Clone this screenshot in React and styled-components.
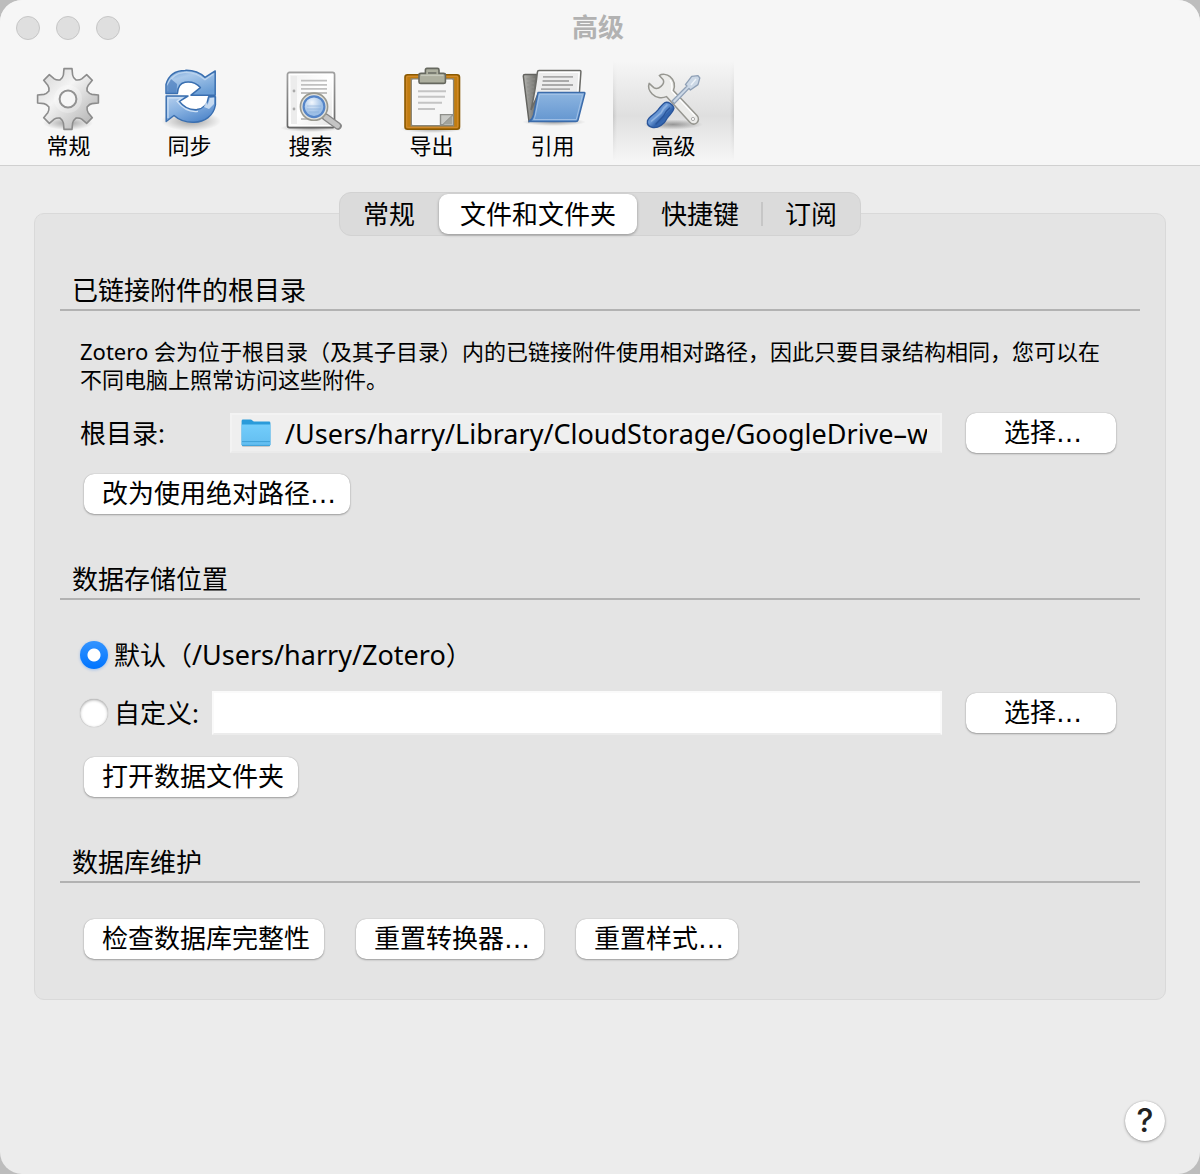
import React, { useState } from 'react';
import styled, { createGlobalStyle, css } from 'styled-components';

const GlobalStyle = createGlobalStyle`
  * {
    box-sizing: border-box;
  }
  body {
    margin: 0;
    background: #bdbdbd;
    color: #000;
    font-family: 'Noto Sans', 'Noto Sans CJK SC', sans-serif;
    font-size: 26px;
    line-height: 34px;
  }
  button, input {
    font: inherit;
    color: inherit;
  }
`;

const Window = styled.main`
  display: flex;
  flex-direction: column;
  min-height: 100vh;
  border-radius: 22px;
  background: #ececec;
  overflow: hidden;
`;

const Header = styled.header`
  background: #f6f6f6;
  border-bottom: 1px solid #d0d0d0;
`;

const TitleBar = styled.div`
  display: grid;
  grid-template-columns: 1fr auto 1fr;
  align-items: center;
  height: 56px;
  padding: 0 20px 0 16px;
`;

const Lights = styled.div`
  display: flex;
  gap: 16px;
`;

const Light = styled.button`
  width: 24px;
  height: 24px;
  padding: 0;
  border: 1px solid #c6c6c6;
  border-radius: 50%;
  background: #dfdfdf;
`;

const Title = styled.h1`
  margin: 0;
  padding-bottom: 2px;
  color: #b2b2b2;
  font-size: 26px;
  font-weight: 700;
`;

const Toolbar = styled.nav`
  display: flex;
  padding: 5px 8px 4px;
`;

const ToolbarButton = styled.button`
  display: flex;
  flex-direction: column;
  align-items: center;
  width: 121px;
  height: 100px;
  padding: 6px 0 0;
  border: 0;
  background: none;
  font-size: 22px;
  line-height: 28px;
  ${({ $active }) => $active && css`
    background:
      linear-gradient(#f6f6f6, transparent 55%, #f6f6f6),
      linear-gradient(90deg, #c8c8c8, #dfdfdf 4px, #dfdfdf calc(100% - 4px), #c8c8c8);
  `}
  svg {
    flex: none;
    margin-right: 2px;
    overflow: visible;
  }
`;

const Content = styled.div`
  display: flex;
  flex-direction: column;
  padding: 26px 34px 0;
`;

const Tabs = styled.div`
  display: flex;
  align-items: center;
  align-self: center;
  z-index: 1;
  height: 44px;
  padding: 0 1px;
  border: 1px solid #d2d2d2;
  border-radius: 12px;
  background: #dbdbdb;
`;

const Tab = styled.button`
  height: 40px;
  padding: 0 22px;
  border: 0;
  border-radius: 9px;
  background: none;
  ${({ $active }) => $active && css`
    margin: 0 2px;
    padding: 0 21px;
    background: #fff;
    box-shadow: 0 1px 3px rgba(0, 0, 0, 0.35);
  `}
`;

const TabDivider = styled.span`
  width: 2px;
  height: 24px;
  background: #c6c6c6;
`;

const Panel = styled.div`
  display: flex;
  flex-direction: column;
  gap: 48px;
  margin-top: -23px;
  padding: 59px 25px 40px;
  border: 1px solid #d9d9d9;
  border-radius: 10px;
  background: #e4e4e4;
`;

const SectionTitle = styled.h2`
  margin: 0;
  padding: 0 12px 2px;
  border-bottom: 2px solid #b2b2b2;
  font-size: 26px;
  font-weight: 400;
`;

const SectionBody = styled.div`
  padding: ${({ $top }) => $top || 36}px 24px 0 20px;
`;

const Note = styled.p`
  margin: 0 0 18px;
  font-size: 22px;
  line-height: 28px;
`;

const Row = styled.div`
  display: flex;
  align-items: center;
  min-height: 44px;
`;

const FieldLabel = styled.label`
  flex: none;
  width: ${({ $width }) => $width}px;
`;

const PathField = styled.div`
  display: flex;
  flex: 1;
  align-items: center;
  gap: 14px;
  min-width: 0;
  height: 40px;
  margin-right: 24px;
  padding: 0 13px 0 9px;
  border: 2px solid #f3f3f3;
  border-bottom-color: #ebebeb;
  background: #efefef;
  svg {
    flex: none;
  }
`;

const PathInput = styled.input`
  flex: 1;
  min-width: 0;
  height: 36px;
  padding: 0;
  border: 0;
  outline: 0;
  background: none;
  font-size: 27px;
`;

const TextInput = styled.input`
  flex: 1;
  min-width: 0;
  height: 44px;
  margin-right: 24px;
  padding: 0 8px;
  border: 2px solid #fafafa;
  border-bottom-color: #ececec;
  outline: 0;
  background: #fff;
`;

const Latin = styled.span`
  font-size: 27px;
`;

const Button = styled.button`
  min-width: ${({ $min }) => $min || 0}px;
  height: 40px;
  padding: 0 14px 0 18px;
  border: 0;
  border-radius: 10px;
  background: #fff;
  box-shadow: 0 0 1px rgba(0, 0, 0, 0.3), 0 1px 2px rgba(0, 0, 0, 0.3);
  font-family: 'DejaVu Sans', 'Noto Sans CJK SC', sans-serif;
  white-space: nowrap;
`;

const ButtonRow = styled.div`
  display: flex;
  gap: 32px;
  margin-top: ${({ $top }) => $top || 0}px;
  padding-left: 4px;
`;

const Radio = styled.input`
  flex: none;
  appearance: none;
  width: 28px;
  height: 28px;
  margin: 0 6px 0 0;
  border-radius: 50%;
  background: #fff;
  box-shadow: inset 0 1px 3px rgba(0, 0, 0, 0.35), 0 0 1px rgba(0, 0, 0, 0.3);
  &:checked {
    background: radial-gradient(circle, #fff 6px, transparent 7px), linear-gradient(#3394ff, #0074ff);
    box-shadow: 0 1px 3px rgba(0, 110, 255, 0.3);
  }
`;

const RadioRow = styled(Row)`
  min-height: 38px;
  margin-bottom: 17px;
`;

const Footer = styled.footer`
  display: flex;
  justify-content: flex-end;
  margin-top: auto;
  padding: 24px 35px 33px;
`;

const HelpButton = styled.button`
  width: 40px;
  height: 40px;
  padding: 0;
  border: 0;
  border-radius: 50%;
  background: #fff;
  box-shadow: 0 0 1px rgba(0, 0, 0, 0.3), 0 1px 3px rgba(0, 0, 0, 0.3);
  color: #222;
  font-family: Inter, sans-serif;
  font-size: 32px;
  font-weight: 500;
  line-height: 40px;
`;

// eight teeth, each one the same outline turned by 45 degrees
const gearPath = () => {
  const turn = (x, y, deg) => {
    const a = (deg * Math.PI) / 180;
    return `${(32 + x * Math.cos(a) - y * Math.sin(a)).toFixed(2)} ${(32 + x * Math.sin(a) + y * Math.cos(a)).toFixed(2)}`;
  };
  let d = '';
  for (let i = 0; i < 8; i += 1) {
    const a = i * 45;
    d += `${i ? 'L' : 'M'}${turn(-4, -30.4, a)}L${turn(4, -30.4, a)}L${turn(4.6, -24, a)}`;
    d += `Q${turn(5, -21.4, a)} ${turn(7.9, -19.1, a)}`;
    d += `Q${turn(-5, -21.4, a + 45)} ${turn(-4.6, -24, a + 45)}`;
  }
  return `${d}Z`;
};

const Shadow = ({ cx = 32, cy, rx = 26, ry = 5 }) => (
  <>
    <radialGradient id="shadow">
      <stop offset="0" stopColor="#000" stopOpacity="0.34" />
      <stop offset="1" stopColor="#000" stopOpacity="0" />
    </radialGradient>
    <ellipse cx={cx} cy={cy} rx={rx} ry={ry} fill="url(#shadow)" />
  </>
);

const GearIcon = () => (
  <svg width="64" height="64" viewBox="0 0 64 64">
    <defs>
      <linearGradient id="gear" x1="0" y1="0" x2="1" y2="1">
        <stop offset="0" stopColor="#d0d0d0" />
        <stop offset="0.4" stopColor="#f4f4f4" />
        <stop offset="1" stopColor="#a8a8a8" />
      </linearGradient>
    </defs>
    <Shadow cy={56} rx={25} ry={7} />
    <path d={gearPath()} fill="url(#gear)" stroke="#8c8c8c" strokeWidth="1.6" strokeLinejoin="round" />
    <circle cx="32" cy="32" r="14" fill="#fff" opacity="0.25" />
    <circle cx="32" cy="32" r="8.4" fill="#f6f6f6" stroke="#929292" strokeWidth="2" />
  </svg>
);

const SyncIcon = () => (
  <svg width="64" height="64" viewBox="0 0 64 64">
    <defs>
      <linearGradient id="syncTop" x1="0" y1="0" x2="0.6" y2="1">
        <stop offset="0" stopColor="#6f9fd4" />
        <stop offset="0.35" stopColor="#a9c8ea" />
        <stop offset="1" stopColor="#6c9fd6" />
      </linearGradient>
      <linearGradient id="syncLow" x1="0" y1="0" x2="0.7" y2="1">
        <stop offset="0" stopColor="#b6d0ee" />
        <stop offset="0.5" stopColor="#86b0e0" />
        <stop offset="1" stopColor="#4f86ca" />
      </linearGradient>
    </defs>
    <Shadow cx={34} cy={54} rx={30} ry={10} />
    <path d="M20 27V18C26 13 34 14 43 20L34 28.4H58V31L51 41H30L22 33L29 28.4Z" fill="#fff" />
    <path d="M9 26.6V17.5C11.4 8.4 18.4 3.4 28 3.4C37 3 42.6 5.5 48 10.4L58.2 4V28.2H34L43.4 20.6C39 15.6 33 14.4 28 15.2C22.6 16.2 20.6 20 20.4 26.6Z" fill="url(#syncTop)" stroke="#3a6fb0" strokeWidth="1.5" strokeLinejoin="round" />
    <path d="M10.8 24V18C13.4 10 19.6 5.8 28 5.3C37 5 42.6 8 48 12.8L56.4 7" fill="none" stroke="#bcd4ee" strokeWidth="1.2" />
    <path d="M10 26V19L14 12L20 17L19.6 26Z" fill="#3a70b6" opacity="0.6" />
    <path d="M58.4 29.8V38C56.6 49 47.6 55 37 55.3C30 55.5 22 53 17 48.5L9.2 54.5V29H31L22.4 34.4C27 40.5 33 43.2 40 42.6C46 41.8 50.6 37 51.6 29.8Z" fill="url(#syncLow)" stroke="#3a6fb0" strokeWidth="1.5" strokeLinejoin="round" />
    <path d="M11 51V30.8H25L20 34.4C26 42 33 45.4 41 44.4" fill="none" stroke="#cfe1f5" strokeWidth="1.2" />
    <path d="M47 40L49 34L50.6 38L53 31L57 30.6V37L52 42Z" fill="#e6effa" opacity="0.7" />
  </svg>
);

const SearchIcon = () => (
  <svg width="64" height="64" viewBox="0 0 64 64">
    <defs>
      <linearGradient id="sheet" x1="0" y1="0" x2="1" y2="1">
        <stop offset="0" stopColor="#f0f0f0" />
        <stop offset="0.5" stopColor="#fff" />
        <stop offset="1" stopColor="#e2e2e2" />
      </linearGradient>
      <linearGradient id="sheetEdge" x1="0" y1="0" x2="0" y2="1">
        <stop offset="0" stopColor="#a0a0a0" />
        <stop offset="1" stopColor="#666" />
      </linearGradient>
      <radialGradient id="lens" cx="0.4" cy="0.3">
        <stop offset="0" stopColor="#f2f7fd" />
        <stop offset="1" stopColor="#9dbfe6" />
      </radialGradient>
    </defs>
    <Shadow cx={33} cy={61} rx={31} ry={4} />
    <rect x="9.5" y="5.5" width="47" height="55" rx="2" fill="url(#sheet)" stroke="url(#sheetEdge)" strokeWidth="1.8" />
    <rect x="11.4" y="7.4" width="43.2" height="51.2" fill="none" stroke="#fff" strokeWidth="1.4" />
    <rect x="13" y="9" width="6" height="48" fill="#ececec" />
    <circle cx="16" cy="24" r="1.4" fill="#aaa" />
    <circle cx="16" cy="42" r="1.4" fill="#aaa" />
    <path d="M23 13.7H49M23 17.8H49M23 21.9H49M23 26H49M23 52H30" stroke="#c0c0c0" strokeWidth="1.8" />
    <path d="M47.5 50L60 59" stroke="#868686" strokeWidth="7.6" strokeLinecap="round" />
    <path d="M47.5 50L59.6 58.8" stroke="#c4c4c4" strokeWidth="4.8" strokeLinecap="round" />
    <circle cx="36" cy="39.7" r="13.6" fill="#e2e2dd" stroke="#999990" strokeWidth="1.6" />
    <circle cx="36" cy="39.7" r="10.4" fill="url(#lens)" stroke="#5585c8" strokeWidth="2.2" />
    <path d="M29 39H43M29 42H43M31 45H41" stroke="#8aafda" strokeWidth="1" opacity="0.6" />
  </svg>
);

const ClipboardIcon = () => (
  <svg width="64" height="64" viewBox="0 0 64 64">
    <Shadow cx={33} cy={62} rx={32} ry={4} />
    <rect x="6" y="7.7" width="54.5" height="54.5" rx="2.5" fill="#c17d11" stroke="#8a5902" strokeWidth="1.6" />
    <rect x="7.7" y="9.4" width="51" height="51" rx="1" fill="none" stroke="#d0892a" strokeWidth="1.2" />
    <path d="M12.4 12H54.4V58.6H12.4Z" fill="#f6f6f6" stroke="#8b8779" strokeWidth="1.6" />
    <path d="M13.6 13.2H53.2V57.4H13.6Z" fill="none" stroke="#fff" strokeWidth="1" />
    <path d="M19 24.2H47M19 29.8H46M19 35.8H43M19 42H36" stroke="#c4c4c4" strokeWidth="2" />
    <path d="M41.5 57.8V47.6H54V48L44 57.8Z" fill="#c9cac6" stroke="#8e8f8a" strokeWidth="1.4" />
    <path d="M44 57.8L53.6 48.2V57.8Z" fill="#a1a39c" />
    <path d="M20 15V8Q20 6.4 22 6.4H26.4V3Q26.4 1.4 28 1.4H38.4Q40 1.4 40 3V6.4H44.4Q46.4 6.4 46.4 8V15Q46.4 16.4 44.6 16.4H21.8Q20 16.4 20 15Z" fill="#adaf9f" stroke="#66685f" strokeWidth="1.6" />
    <path d="M22 8.4H44.4" stroke="#c6c8bb" strokeWidth="1.4" />
    <path d="M29 6H37.4" stroke="#7a7c72" strokeWidth="2" />
  </svg>
);

const FolderIcon = () => (
  <svg width="64" height="64" viewBox="0 0 64 64">
    <defs>
      <linearGradient id="folderFront" x1="0" y1="0" x2="0" y2="1">
        <stop offset="0" stopColor="#8db5e0" />
        <stop offset="1" stopColor="#6496d0" />
      </linearGradient>
      <linearGradient id="folderBack" x1="0" y1="0" x2="1" y2="0">
        <stop offset="0" stopColor="#b4b4b0" />
        <stop offset="1" stopColor="#6c6c68" />
      </linearGradient>
    </defs>
    <Shadow cx={34} cy={55} rx={32} ry={4} />
    <path d="M3.3 9Q3.3 7.4 5 7.4H17V50L9 54.5Z" fill="url(#folderBack)" stroke="#63635f" strokeWidth="1.5" />
    <path d="M6.5 12H15M6.8 16H14M7 20H14M7.4 24H13.5M7.7 28H13M8 32H12.5" stroke="#8f8f8b" strokeWidth="1" />
    <path d="M17.4 5Q17.6 3.5 19 3.5H60Q61 3.5 60.9 5L59.3 27H18L11 43Q16 20 17.4 5Z" fill="#ededed" stroke="#6b6b67" strokeWidth="1.5" />
    <path d="M19.3 5.3H59L57.8 25" fill="none" stroke="#fff" strokeWidth="1.2" />
    <path d="M23 9.8H53M22.6 14H49M22 18H53M21 22.2H50" stroke="#aaa" strokeWidth="1.8" />
    <path d="M18 25.6H64.4Q65 25.6 64.8 26.6L58 53Q57.6 54.5 56 54.5H9Q12.5 52.5 13.6 48Z" fill="url(#folderFront)" stroke="#3c6cab" strokeWidth="1.5" strokeLinejoin="round" />
    <path d="M13.6 52.6Q14.8 51 15.4 48L19.5 27.4H62.6L56.3 52.6Z" fill="none" stroke="#a3c2e6" strokeWidth="1" />
  </svg>
);

const ToolsIcon = () => (
  <svg width="64" height="64" viewBox="0 0 64 64">
    <defs>
      <linearGradient id="handle" x1="0" y1="0" x2="1" y2="1">
        <stop offset="0" stopColor="#3f75c0" />
        <stop offset="0.45" stopColor="#6d9ad6" />
        <stop offset="0.6" stopColor="#3263ac" />
        <stop offset="1" stopColor="#4a80c8" />
      </linearGradient>
    </defs>
    <Shadow cx={32} cy={57.5} rx={30} ry={5} />
    <path d="M18.3 8.6C21 6.6 26 7 29 9.6C33 13 34.3 18.4 32.4 23.6L56 48.4C58.2 50.8 57.8 54.2 55.6 56C53.4 57.6 50.6 57.2 48.6 55L25.4 29.6C20.6 31.6 14.6 30.6 11.2 27C8.2 23.8 7 19.4 8.2 16.4L12.8 20.6C14.8 22 17.8 21.4 20 19.4C22.4 17.2 23.2 14.4 22 12.4Z" fill="#ececea" stroke="#969690" strokeWidth="1.5" strokeLinejoin="round" />
    <path d="M29 13Q32 18 30.4 23.8L54 49" fill="none" stroke="#fff" strokeWidth="1.2" />
    <circle cx="52" cy="52" r="1.6" fill="#fff" stroke="#aaa" strokeWidth="1" />
    <path d="M31 34L46 19L44.4 17.6L50.7 9.4L57 8.6L58.8 11L57 17.6L49.4 23L48 21.4L33.4 36.6Z" fill="#ccd8e6" stroke="#8fa0b6" strokeWidth="1.3" strokeLinejoin="round" />
    <path d="M50 18L55 12" stroke="#eef3f9" strokeWidth="1.4" />
    <path d="M24 35.6C27 34.2 32.6 38 33 41C32.4 45.4 28.4 47.6 26 51.4C23.6 57 17 61.4 12 60.6C8 59.8 5.8 57.4 6.4 54C7.4 49.4 13.4 47.6 16.8 43.2C19 40.2 21.4 37.2 24 35.6Z" fill="url(#handle)" stroke="#2a559a" strokeWidth="1.3" />
    <path d="M26 38Q22.6 40.6 20 46L10.6 54" fill="none" stroke="#8fb3e2" strokeWidth="1.6" strokeLinecap="round" />
    <path d="M28.6 41Q24.6 44 22.6 49L15 57" fill="none" stroke="#2a559a" strokeWidth="1.2" strokeLinecap="round" />
  </svg>
);

const BlueFolder = () => (
  <svg width="30" height="30" viewBox="0 0 30 30" aria-hidden="true">
    <defs>
      <linearGradient id="blueFolder" x1="0" y1="0" x2="0" y2="1">
        <stop offset="0" stopColor="#73cdfb" />
        <stop offset="1" stopColor="#62bdf0" />
      </linearGradient>
    </defs>
    <rect x="1" y="26" width="28" height="3" rx="1.5" fill="#000" opacity="0.16" />
    <path d="M0.6 27V3Q0.6 1.6 2 1.6H9.4Q10.6 1.6 11.4 2.4L12.8 3.6H28Q29.4 3.6 29.4 5V27Z" fill="#2a9bda" />
    <path d="M0.6 6.6H29.4V26.4Q29.4 28 28 28H2Q0.6 28 0.6 26.4Z" fill="url(#blueFolder)" />
    <path d="M1 23.6H29M1 27.4H29" stroke="#3fa2d8" strokeWidth="1" />
  </svg>
);

const panes = [
  { name: '常规', Icon: GearIcon },
  { name: '同步', Icon: SyncIcon },
  { name: '搜索', Icon: SearchIcon },
  { name: '导出', Icon: ClipboardIcon },
  { name: '引用', Icon: FolderIcon },
  { name: '高级', Icon: ToolsIcon },
];

export default function App() {
  const [location, setLocation] = useState('default');
  const [custom, setCustom] = useState('');

  return (
    <>
      <GlobalStyle />
      <Window>
        <Header>
          <TitleBar>
            <Lights>
              <Light aria-label="关闭" />
              <Light aria-label="最小化" />
              <Light aria-label="缩放" />
            </Lights>
            <Title>高级</Title>
          </TitleBar>
          <Toolbar>
            {panes.map(({ name, Icon }) => (
              <ToolbarButton key={name} $active={name === '高级'}>
                <Icon />
                {name}
              </ToolbarButton>
            ))}
          </Toolbar>
        </Header>

        <Content>
          <Tabs role="tablist">
            <Tab role="tab">常规</Tab>
            <Tab role="tab" aria-selected="true" $active>文件和文件夹</Tab>
            <Tab role="tab">快捷键</Tab>
            <TabDivider />
            <Tab role="tab">订阅</Tab>
          </Tabs>

          <Panel>
            <section>
              <SectionTitle>已链接附件的根目录</SectionTitle>
              <SectionBody $top={26}>
                <Note>
                  Zotero 会为位于根目录（及其子目录）内的已链接附件使用相对路径，因此只要目录结构相同，您可以在不同电脑上照常访问这些附件。
                </Note>
                <Row>
                  <FieldLabel htmlFor="base-dir" $width={150}>根目录:</FieldLabel>
                  <PathField>
                    <BlueFolder />
                    <PathInput id="base-dir" readOnly value="/Users/harry/Library/CloudStorage/GoogleDrive–w" />
                  </PathField>
                  <Button $min={150}>选择…</Button>
                </Row>
                <ButtonRow $top={19}>
                  <Button>改为使用绝对路径…</Button>
                </ButtonRow>
              </SectionBody>
            </section>

            <section>
              <SectionTitle>数据存储位置</SectionTitle>
              <SectionBody>
                <RadioRow>
                  <Radio
                    type="radio"
                    id="dir-default"
                    name="data-dir"
                    checked={location === 'default'}
                    onChange={() => setLocation('default')}
                  />
                  <label htmlFor="dir-default">
                    默认（
                    <Latin>/Users/harry/Zotero</Latin>
                    ）
                  </label>
                </RadioRow>
                <Row>
                  <Radio
                    type="radio"
                    id="dir-custom"
                    name="data-dir"
                    checked={location === 'custom'}
                    onChange={() => setLocation('custom')}
                  />
                  <FieldLabel htmlFor="dir-custom" $width={98}>自定义:</FieldLabel>
                  <TextInput
                    aria-label="自定义"
                    value={custom}
                    onChange={(e) => setCustom(e.target.value)}
                  />
                  <Button $min={150}>选择…</Button>
                </Row>
                <ButtonRow $top={22}>
                  <Button>打开数据文件夹</Button>
                </ButtonRow>
              </SectionBody>
            </section>

            <section>
              <SectionTitle>数据库维护</SectionTitle>
              <SectionBody>
                <ButtonRow>
                  <Button>检查数据库完整性</Button>
                  <Button>重置转换器…</Button>
                  <Button>重置样式…</Button>
                </ButtonRow>
              </SectionBody>
            </section>
          </Panel>
        </Content>

        <Footer>
          <HelpButton aria-label="帮助">?</HelpButton>
        </Footer>
      </Window>
    </>
  );
}
